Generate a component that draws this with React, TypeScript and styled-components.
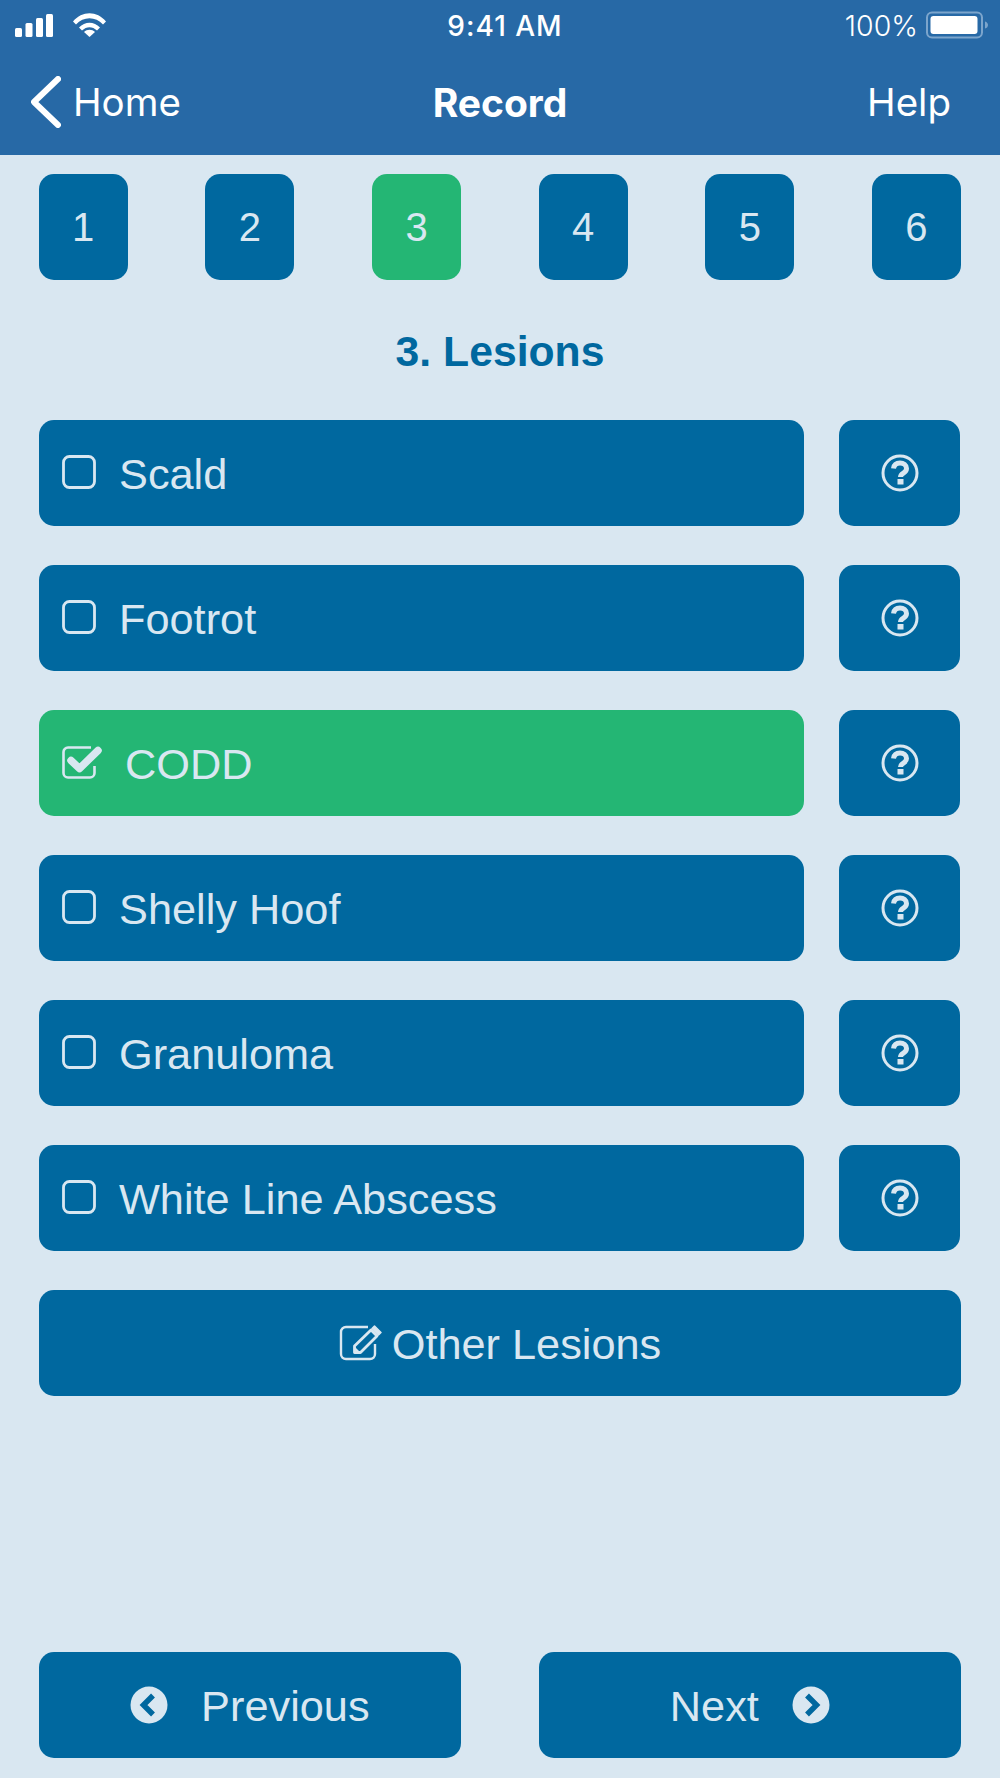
import styled, { createGlobalStyle } from "styled-components";

const GlobalStyle = createGlobalStyle`
  html, body {
    margin: 0;
    padding: 0;
    background: #d9e7f1;
  }
  * {
    box-sizing: border-box;
  }
`;

const Page = styled.div`
  display: flex;
  flex-direction: column;
  width: 1000px;
  height: 1778px;
  background: #d9e7f1;
  font-family: "Liberation Sans", Arial, sans-serif;
  color: #d9e7f1;
`;

const TopBar = styled.header`
  height: 155px;
  flex-shrink: 0;
  background: #2769a6;
  color: #fff;
  font-family: Inter, "Liberation Sans", sans-serif;
`;

const StatusBar = styled.div`
  display: grid;
  grid-template-columns: 1fr auto 1fr;
  align-items: center;
  height: 50px;
  padding: 0 12px 0 15px;
`;

const StatusLeft = styled.div`
  display: flex;
  align-items: center;
  gap: 20px;
`;

const StatusTime = styled.div`
  margin: 2px 0 0 7px;
  font-size: 28px;
  letter-spacing: 1px;
  font-weight: 500;
`;

const StatusRight = styled.div`
  display: flex;
  align-items: center;
  justify-content: flex-end;
  gap: 8px;
  font-size: 28.5px;
  font-weight: 300;
`;

const NavBar = styled.nav`
  display: grid;
  grid-template-columns: 1fr auto 1fr;
  align-items: center;
  height: 104px;
  padding: 0 31px;
  font-size: 38.5px;
`;

const BackLink = styled.div`
  display: flex;
  align-items: center;
  gap: 12px;
`;

const NavTitle = styled.div`
  font-weight: 700;
  font-size: 39px;
`;

const HelpLink = styled.div`
  justify-self: end;
  margin-right: 18px;
`;

const StepRow = styled.div`
  display: flex;
  justify-content: space-between;
  padding: 19px 39px 0 38.7px;
`;

const Step = styled.div<{ $active?: boolean }>`
  display: flex;
  align-items: center;
  justify-content: center;
  width: 89px;
  height: 106px;
  border-radius: 15px;
  background: ${(props) => (props.$active ? "#24b674" : "#00689f")};
  font-size: 40px;
`;

const Heading = styled.h1`
  margin: 0;
  padding: 38px 0 0;
  height: 140px;
  text-align: center;
  font-size: 42.7px;
  line-height: 66px;
  font-weight: 700;
  color: #00689f;
`;

const List = styled.div`
  display: flex;
  flex-direction: column;
  gap: 39px;
  padding: 0 39px;
`;

const Row = styled.div`
  display: flex;
  gap: 35px;
  margin-right: 1px;
`;

const Lesion = styled.div<{ $checked?: boolean }>`
  display: flex;
  align-items: center;
  gap: ${(props) => (props.$checked ? "22px" : "23px")};
  flex: 1;
  height: 106px;
  padding-left: 23px;
  border-radius: 15px;
  background: ${(props) => (props.$checked ? "#24b674" : "#00689f")};
  font-size: 43.3px;

  svg {
    margin-top: -2px;
  }
`;

const Label = styled.span`
  position: relative;
  top: 1px;
`;

const HelpButton = styled.div`
  display: flex;
  align-items: center;
  justify-content: center;
  width: 121px;
  height: 106px;
  border-radius: 15px;
  background: #00689f;
`;

const OtherButton = styled.div`
  display: flex;
  align-items: center;
  justify-content: center;
  gap: 9px;
  height: 106px;
  border-radius: 15px;
  background: #00689f;
  font-size: 43.3px;
`;

const Footer = styled.footer`
  display: flex;
  justify-content: space-between;
  margin-top: auto;
  padding: 0 39px 20px 38.7px;
`;

const FooterButton = styled.div`
  display: flex;
  align-items: center;
  justify-content: center;
  gap: 33px;
  width: 422.3px;
  height: 106px;
  border-radius: 15px;
  background: #00689f;
  font-size: 43.3px;
`;

const Signal = () => (
  <svg width="38" height="23" viewBox="0 0 38 23" fill="#fff">
    <rect x="0" y="14" width="7" height="9" rx="1.500" />
    <rect x="10.500" y="9" width="7" height="14" rx="1.500" />
    <rect x="21" y="4" width="7" height="19" rx="1.500" />
    <rect x="31" y="0" width="7" height="23" rx="1.500" />
  </svg>
);

const Wifi = () => (
  <svg width="33" height="24" viewBox="0 0 33 24" fill="#fff">
    <path d="M0 8.500C9-2.500 24-2.500 33 8.500l-3 3C22.500 3 10.500 3 3 11.500z" />
    <path d="M6 14.500c6-6.500 15-6.500 21 0l-3 3c-4.500-4.500-10.500-4.500-15 0z" />
    <path d="M16.500 24l-5.500-5c3-3 8-3 11 0z" />
  </svg>
);

const Battery = () => (
  <svg width="62" height="28" viewBox="0 0 62 28">
    <rect x="1" y="1.500" width="55" height="25" rx="5" fill="none" stroke="#7ca5cc" strokeWidth="2" />
    <rect x="4.500" y="5" width="47" height="18" rx="3" fill="#fff" />
    <path d="M59 10.500c2 .5 3 2 3 3.500s-1 3-3 3.500z" fill="#7ca5cc" />
  </svg>
);

const BackChevron = () => (
  <svg width="30" height="52" viewBox="0 0 30 52" fill="none" stroke="#fff" strokeWidth="6" strokeLinecap="round" strokeLinejoin="round">
    <path d="M27 3L3 26l24 23" />
  </svg>
);

const Checkbox = ({ checked }: { checked?: boolean }) =>
  checked ? (
    <svg width="41" height="35" viewBox="0 0 41 35" fill="none">
      <path
        d="M29 2.500H6a4.500 4.500 0 0 0-4.500 4.500v21A4.500 4.500 0 0 0 6 32.500h22a4.500 4.500 0 0 0 4.500-4.500V21"
        stroke="#d9e7f1"
        strokeWidth="2.600"
      />
      <path d="M9 15.500l8.500 8L36 5.500" stroke="#d9e7f1" strokeWidth="7.500" strokeLinejoin="round" strokeLinecap="round" />
    </svg>
  ) : (
    <svg width="34" height="34" viewBox="0 0 34 34" fill="none">
      <rect x="1.500" y="1.500" width="31" height="31" rx="6" stroke="#d9e7f1" strokeWidth="2.800" />
    </svg>
  );

const HelpIcon = () => (
  <svg width="38" height="38" viewBox="0 0 38 38" fill="none">
    <circle cx="19" cy="19" r="17" stroke="#d9e7f1" strokeWidth="3" />
    <path d="M12.500 14.500c.5-3.500 3-5.500 6.500-5.500s6.500 2 6.500 5.500c0 5-6 4-6 8.500" stroke="#d9e7f1" strokeWidth="5" />
    <rect x="16.500" y="25" width="6" height="5.500" fill="#d9e7f1" />
  </svg>
);

const EditIcon = () => (
  <svg width="44" height="36" viewBox="0 0 44 36" fill="none">
    <path
      d="M29 2H7a5 5 0 0 0-5 5v22a5 5 0 0 0 5 5h24a5 5 0 0 0 5-5V19"
      stroke="#d9e7f1"
      strokeWidth="2.400"
    />
    <path d="M15.500 21L32 5l6 6-16.500 16.500H15.500z" stroke="#d9e7f1" strokeWidth="2.800" strokeLinejoin="round" />
    <path d="M35.500 1l6.500 6.500-2.500 2.500-6.500-6.500z" fill="#d9e7f1" stroke="#d9e7f1" strokeWidth="1.500" strokeLinejoin="round" />
    <path d="M15 21l6.500 6.500H15z" fill="#d9e7f1" />
  </svg>
);

const CircleArrow = ({ right }: { right?: boolean }) => (
  <svg width="38" height="38" viewBox="0 0 38 38">
    <circle cx="19" cy="19" r="18.500" fill="#d9e7f1" />
    <path
      d={right ? "M15 9.500l9.500 9.500L15 28.500" : "M23 9.500L13.500 19l9.500 9.500"}
      fill="none"
      stroke="#00689f"
      strokeWidth="5.500"
      strokeLinejoin="miter"
    />
  </svg>
);

const steps = [1, 2, 3, 4, 5, 6];

const lesions = [
  { name: "Scald" },
  { name: "Footrot" },
  { name: "CODD", checked: true },
  { name: "Shelly Hoof" },
  { name: "Granuloma" },
  { name: "White Line Abscess" },
];

function App() {
  return (
    <Page>
      <GlobalStyle />
      <TopBar>
        <StatusBar>
          <StatusLeft>
            <Signal />
            <Wifi />
          </StatusLeft>
          <StatusTime>9:41 AM</StatusTime>
          <StatusRight>
            100%
            <Battery />
          </StatusRight>
        </StatusBar>
        <NavBar>
          <BackLink>
            <BackChevron />
            Home
          </BackLink>
          <NavTitle>Record</NavTitle>
          <HelpLink>Help</HelpLink>
        </NavBar>
      </TopBar>
      <StepRow>
        {steps.map((step) => (
          <Step key={step} $active={step === 3}>
            {step}
          </Step>
        ))}
      </StepRow>
      <Heading>3. Lesions</Heading>
      <List>
        {lesions.map((lesion) => (
          <Row key={lesion.name}>
            <Lesion $checked={lesion.checked}>
              <Checkbox checked={lesion.checked} />
              <Label>{lesion.name}</Label>
            </Lesion>
            <HelpButton>
              <HelpIcon />
            </HelpButton>
          </Row>
        ))}
        <OtherButton>
          <EditIcon />
          <Label>Other Lesions</Label>
        </OtherButton>
      </List>
      <Footer>
        <FooterButton>
          <CircleArrow />
          <Label>Previous</Label>
        </FooterButton>
        <FooterButton>
          <Label>Next</Label>
          <CircleArrow right />
        </FooterButton>
      </Footer>
    </Page>
  );
}

export default App;
